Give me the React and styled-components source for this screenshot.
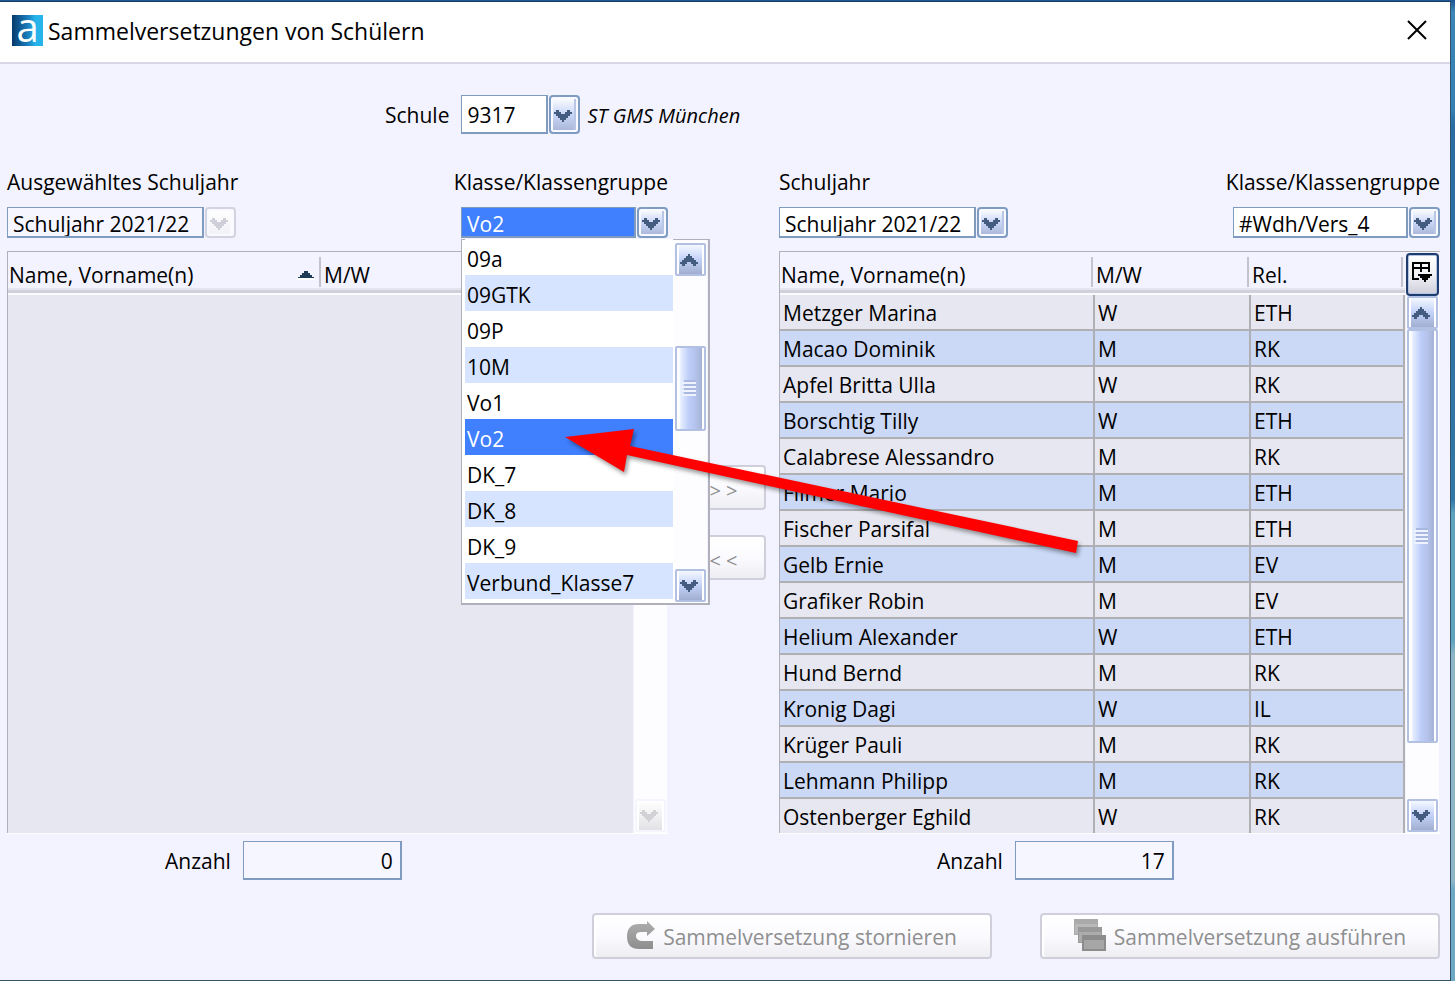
import React from "react";
import styled, { createGlobalStyle } from "styled-components";

const GlobalStyle = createGlobalStyle`
  * {
    box-sizing: border-box;
  }
  body {
    margin: 0;
    overflow: hidden;
  }
  body, button, input, select {
    font-family: "Open Sans", "Noto Sans", sans-serif;
    font-size: 21px;
    line-height: 28px;
    color: #000;
  }
`;

const Desktop = styled.div`
  display: flex;
  height: 100vh;
  padding: 2px 4px 1px 0;
  background: linear-gradient(#1d5590 0, #3a86b8 12px, #3480b2 110px, #296da3 125px, #3278a6 500px, #5ea3bd 514px, #5ea3bd 640px, #8db6c6 655px, #8db6c6 880px, #6da9c4 890px);
`;

const Window = styled.main`
  flex: 1;
  display: flex;
  flex-direction: column;
  min-width: 0;
  background: #f3f3ff;
  border-right: 1px solid #34536a;
  box-shadow: 0 1px 0 #34536a, 0 -1px 0 #1c3f68;
`;

const TitleBar = styled.header`
  display: flex;
  align-items: center;
  gap: 5px;
  height: 62px;
  padding: 0 22px 4px 12px;
  background: #fff;
  border-bottom: 2px solid #d8d7e8;

  h1 {
    flex: 1;
    margin: 0;
    padding-top: 2px;
    font-size: 23px;
    font-weight: 400;
    line-height: 32px;
  }
`;

const Logo = styled.span`
  display: flex;
  justify-content: center;
  width: 31px;
  height: 31px;
  background: linear-gradient(90deg, #06396c, #1a7cbb 50%, #27b4ea 75%);
  color: #fff;
  font-size: 40px;
  line-height: 23px;
`;

const CloseButton = styled.button`
  display: flex;
  padding: 0;
  border: 0;
  background: none;
`;

const Body = styled.div`
  flex: 1;
  display: flex;
  flex-direction: column;
  min-height: 0;
  padding: 31px 10px 21px 7px;
`;

const SchoolRow = styled.div`
  display: flex;
  align-items: center;
  gap: 12px;
  padding-left: 378px;
  margin-bottom: 34px;

  em {
    margin-left: -5px;
    padding-top: 2px;
    font-size: 20px;
  }
`;

const Columns = styled.div`
  flex: 1;
  display: grid;
  grid-template-columns: minmax(0, 1fr) 111px minmax(0, 1fr);
  grid-template-rows: minmax(0, 1fr);
  min-height: 0;
`;

const Panel = styled.section`
  display: flex;
  flex-direction: column;
  min-height: 0;
`;

const Fields = styled.div`
  display: flex;
  justify-content: space-between;
  margin-bottom: 13px;
`;

const Field = styled.div`
  display: flex;
  flex-direction: column;
  align-items: ${props => (props.$end ? "flex-end" : "flex-start")};
  gap: 11px;
  white-space: nowrap;
`;

const ComboBox = styled.div`
  position: relative;
  display: flex;
  gap: 1px;
  width: ${props => props.$width}px;
  height: ${props => (props.$tall ? 39 : 31)}px;

  select {
    appearance: none;
    flex: 1;
    min-width: 0;
    padding: 2px 5px 0;
    border: solid #7f9bbf;
    border-width: 1px 2px 2px 1px;
    border-radius: 0;
    outline: 0;
    background: ${props => (props.$active ? "#4080ff" : props.$disabled ? "#f5f6ff" : "#fff")};
    color: ${props => (props.$active ? "#fff" : "#000")};
    opacity: 1;
  }
`;

const ArrowButton = styled.button`
  display: flex;
  align-items: center;
  justify-content: center;
  flex: none;
  width: 31px;
  padding: 2px 4px 0 0;
  border: 2px solid ${props => (props.disabled ? "#d3d3df" : "#7f9cc2")};
  border-radius: 4px;
  background: ${props =>
    props.disabled ? "linear-gradient(#fff, #f1f1f6)" : "linear-gradient(#fff, #c9d6f8 50%, #a7b4d6)"};
  box-shadow: inset 0 0 0 2px #f8faff, inset -4px 0 0 ${props => (props.disabled ? "#fafaff" : "#bac6e6")};
  color: ${props => (props.disabled ? "#cfcfda" : "#445c80")};
`;

const Popup = styled.div`
  position: absolute;
  top: 32px;
  left: 0;
  z-index: 2;
  display: flex;
  gap: 1px;
  width: 249px;
  height: 366px;
  padding: 0 0 1px 3px;
  border: solid #b0b0bc;
  border-width: 1px 2px 2px 1px;
  background: #fff;
`;

const Options = styled.ul`
  flex: 1;
  margin: -1px 0 0;
  padding: 0;
  overflow: hidden;
  list-style: none;
`;

const Option = styled.li`
  height: 36px;
  padding: 6px 2px 2px;
  background: ${props => (props["aria-selected"] ? "#4080ff" : "#fff")};
  color: ${props => (props["aria-selected"] ? "#fff" : "#000")};

  &:nth-child(even) {
    background: ${props => (props["aria-selected"] ? "#4080ff" : "#d6e4ff")};
  }
`;

const Scroll = styled.div`
  display: flex;
  flex-direction: column;
  flex: ${props => (props.$fill ? 1 : "none")};
  width: 34px;
  min-height: 0;
  padding: ${props => (props.$fill ? "0 1px 1px" : "3px 1px 0")};
  background: #fdfdff;
  border-right: 1px solid #f3f3ff;
`;

const ScrollButton = styled.button`
  display: flex;
  align-items: center;
  justify-content: center;
  flex: none;
  height: 33px;
  padding: 0 4px 0 0;
  border: 2px solid ${props => (props.disabled ? "#f5f5fd" : "#b1c0e3")};
  border-radius: 2px;
  background: ${props =>
    props.disabled ? "linear-gradient(#fff, #e2e2e6)" : "linear-gradient(#f4f8ff, #c2d1f8 50%, #a1aed0)"};
  box-shadow: inset 2px 0 0 #fff, inset -2px 0 0 #fff;
  color: ${props => (props.disabled ? "#d2d2d6" : "#445c80")};
`;

const Track = styled.div`
  flex: 1;
  min-height: 0;
  padding-top: ${props => props.$offset}px;
`;

const Thumb = styled.div`
  display: flex;
  align-items: center;
  justify-content: center;
  height: ${props => props.$size}%;
  padding-right: 3px;
  border: 2px solid #b1c0e3;
  border-radius: 2px;
  background: linear-gradient(90deg, #fff 2px, #e4edff 4px, #bdcdf8 12px, #b5c4ec 18px, #a1add0);
  box-shadow: inset -2px 0 0 #fff;
`;

const Grid = styled.div`
  flex: 1;
  display: flex;
  min-height: 0;
  border: solid #b0b0b8;
  border-width: 1px 0 0 1px;
  box-shadow: 0 1px 0 #fff;
`;

const GridView = styled.div`
  flex: 1;
  min-width: 0;
  overflow: hidden;
  background: #e7e7f1;
`;

const Table = styled.table`
  width: 100%;
  table-layout: fixed;
  border-collapse: separate;
  border-spacing: 0;

  th {
    height: 43px;
    padding: 0;
    font-weight: 400;
    text-align: left;
    background: linear-gradient(#f3f3ff 36px, #e5e5ef 36px, #e5e5ef 38px, #d0d0da 38px, #d0d0da 41px, #fafaff 41px);
  }
  th:first-child {
    width: 315px;
  }
  th:nth-child(2):not(:last-child) {
    width: 156px;
  }
  td {
    height: 36px;
    padding: 4px 3px 2px;
    border: solid #b0b0b4;
    border-width: 0 2px 2px 0;
  }
  tbody tr:nth-child(even) {
    background: #cbd9f6;
  }
`;

const HeadCell = styled.div`
  display: flex;
  align-items: center;
  justify-content: space-between;
  height: 30px;
  margin: 2px 2px 6px 0;
  padding: 6px 4px 0 1px;
  border-right: 2px solid #c3c3d0;
`;

const GridSide = styled.div`
  display: flex;
  flex-direction: column;
  width: 35px;
  padding-left: 1px;
`;

const ColumnControl = styled.button`
  display: flex;
  align-items: center;
  justify-content: center;
  width: 33px;
  height: 43px;
  margin-top: 1px;
  padding: 0 1px 6px 0;
  border: 2px solid #1e3c70;
  border-radius: 4px;
  background: linear-gradient(#fff, #f1f1f6 50%, #cfcfdc);
  box-shadow: inset 0 0 0 1px #b4c4e0;
`;

const Transfer = styled.div`
  display: flex;
  flex-direction: column;
  align-items: center;
  gap: 25px;
  padding-top: 297px;
`;

const PushButton = styled.button`
  display: flex;
  align-items: center;
  justify-content: center;
  gap: 8px;
  width: ${props => (props.$small ? 85 : 400)}px;
  height: ${props => (props.$small ? 45 : 46)}px;
  padding: ${props => (props.$small ? 6 : 2)}px 0 0;
  border: 2px solid #cfcedb;
  border-radius: 4px;
  background: linear-gradient(#fff, #fbfbff 50%, #ededf2);
  box-shadow: inset 2px 0 0 #fff;
  color: #8f8f8f;
  font-size: ${props => (props.$small ? 20 : 21)}px;

  svg {
    margin-bottom: 4px;
  }
`;

const Count = styled.div`
  display: flex;
  align-items: center;
  gap: 12px;
  padding-left: 158px;
  margin-top: 8px;

  input {
    width: 159px;
    height: 39px;
    padding: 2px 7px 0;
    border: solid #7f9bbf;
    border-width: 1px 2px 2px 1px;
    outline: 0;
    background: #f5f6ff;
    text-align: right;
  }
`;

const Footer = styled.footer`
  display: flex;
  justify-content: flex-end;
  gap: 48px;
  margin-top: 33px;
`;

const Pointer = styled.svg`
  position: absolute;
  top: 425px;
  left: 560px;
  z-index: 3;
  pointer-events: none;
  filter: drop-shadow(2px 3px 2px rgba(0, 0, 0, 0.4));
`;

const classes = ["09a", "09GTK", "09P", "10M", "Vo1", "Vo2", "DK_7", "DK_8", "DK_9", "Verbund_Klasse7"];

const pupils = [
  ["Metzger Marina", "W", "ETH"],
  ["Macao Dominik", "M", "RK"],
  ["Apfel Britta Ulla", "W", "RK"],
  ["Borschtig Tilly", "W", "ETH"],
  ["Calabrese Alessandro", "M", "RK"],
  ["Filmer Mario", "M", "ETH"],
  ["Fischer Parsifal", "M", "ETH"],
  ["Gelb Ernie", "M", "EV"],
  ["Grafiker Robin", "M", "EV"],
  ["Helium Alexander", "W", "ETH"],
  ["Hund Bernd", "M", "RK"],
  ["Kronig Dagi", "W", "IL"],
  ["Krüger Pauli", "M", "RK"],
  ["Lehmann Philipp", "M", "RK"],
  ["Ostenberger Eghild", "W", "RK"]
];

const Chevron = ({ up }) => (
  <svg width="18" height="12" viewBox="0 0 18 12" fill="currentColor" shapeRendering="crispEdges">
    <path
      d="M0 4V2H2V0H5V2H7V4H11V2H13V0H16V2H18V4H16V6H14V8H12V10H10V12H8V10H6V8H4V6H2V4Z"
      transform={up ? "rotate(180 9 6)" : undefined}
    />
  </svg>
);

const SortIcon = () => (
  <svg width="18" height="11" viewBox="0 0 18 11" shapeRendering="crispEdges">
    <path d="M0 9h18v2H0z" fill="#fff" />
    <path d="M1 9V8h2V6h2V4h2V2h4v2h2v2h2v2h2v1z" fill="#1d3c55" />
  </svg>
);

const Grip = () => (
  <svg width="14" height="16" viewBox="0 0 14 16" shapeRendering="crispEdges">
    <path d="M2 0h12v2H2zM2 4h12v2H2zM2 8h12v2H2zM2 12h12v2H2z" fill="#a9b8de" />
    <path d="M0 2h14v2H0zM0 6h14v2H0zM0 10h14v2H0zM0 14h14v2H0z" fill="#eef3ff" />
  </svg>
);

const ColumnsIcon = () => (
  <svg width="20" height="20" viewBox="0 0 20 20" shapeRendering="crispEdges">
    <path d="M1 18V1h16v9M1 6h16M9 1v9M1 17h6" fill="none" stroke="#000" strokeWidth="2" />
    <path d="M6 12h14v2h-2v2h-2v2h-2v2h-2v-2h-2v-2H8v-2H6z" fill="#000" />
  </svg>
);

const UndoIcon = () => (
  <svg width="28" height="28" viewBox="0 0 28 28">
    <defs>
      <linearGradient id="undo" x1="0" y1="0" x2="0" y2="1">
        <stop offset="0" stopColor="#aeaeae" />
        <stop offset="1" stopColor="#8e8e8e" />
      </linearGradient>
    </defs>
    <path d="M20 0L28 8L20 15V11H14Q9 11 9 15T14 20H26V28H12Q0 28 0 15.500Q0 3 12 3H20Z" fill="url(#undo)" />
  </svg>
);

const StackIcon = () => (
  <svg width="32" height="32" viewBox="0 0 32 32">
    <path d="M0 0h24v16H0z" fill="#aaa" />
    <path d="M1 5h22v10H1z" fill="#b8b8b8" />
    <path d="M4 8h24v16H4z" fill="#999" />
    <path d="M5 13h22v10H5z" fill="#acacac" />
    <path d="M8 16h24v16H8z" fill="#8c8c8c" />
    <path d="M10 21h20v9H10z" fill="#a6a6a6" />
  </svg>
);

const Combo = ({ id, value, width, tall, disabled, active, label, children }) => (
  <ComboBox $width={width} $tall={tall} $disabled={disabled} $active={active}>
    <select id={id} disabled={disabled} defaultValue={value}>
      <option>{value}</option>
    </select>
    <ArrowButton type="button" aria-label={`${label} öffnen`} disabled={disabled}>
      <Chevron />
    </ArrowButton>
    {children}
  </ComboBox>
);

const ScrollBar = ({ fill, disabled, offset, size }) => (
  <Scroll $fill={fill}>
    <ScrollButton type="button" aria-label="Nach oben" disabled={disabled}>
      <Chevron up />
    </ScrollButton>
    <Track $offset={offset}>
      {!disabled && (
        <Thumb $size={size}>
          <Grip />
        </Thumb>
      )}
    </Track>
    <ScrollButton type="button" aria-label="Nach unten" disabled={disabled}>
      <Chevron />
    </ScrollButton>
  </Scroll>
);

const PupilGrid = ({ columns, rows, sorted }) => (
  <Grid>
    <GridView>
      <Table>
        <thead>
          <tr>
            {columns.map((name, i) => (
              <th key={name}>
                <HeadCell>
                  {name}
                  {sorted && i === 0 && <SortIcon />}
                </HeadCell>
              </th>
            ))}
          </tr>
        </thead>
        <tbody>
          {rows.map(row => (
            <tr key={row[0]}>
              {row.map((cell, i) => (
                <td key={i}>{cell}</td>
              ))}
            </tr>
          ))}
        </tbody>
      </Table>
    </GridView>
    <GridSide>
      <ColumnControl type="button" aria-label="Spalten">
        <ColumnsIcon />
      </ColumnControl>
      <ScrollBar fill disabled={!rows.length} offset={0} size={88} />
    </GridSide>
  </Grid>
);

const App = () => {
  return (
    <Desktop>
      <GlobalStyle />
      <Window>
        <TitleBar>
          <Logo>a</Logo>
          <h1>Sammelversetzungen von Schülern</h1>
          <CloseButton type="button" aria-label="Schließen">
            <svg width="22" height="22" viewBox="0 0 22 22" stroke="#000" strokeWidth="2">
              <path d="M2 2l18 18M20 2L2 20" />
            </svg>
          </CloseButton>
        </TitleBar>
        <Body>
          <SchoolRow>
            <label htmlFor="school">Schule</label>
            <Combo id="school" label="Schule" value="9317" width={119} tall />
            <em>ST GMS München</em>
          </SchoolRow>
          <Columns>
            <Panel>
              <Fields>
                <Field>
                  <label htmlFor="yearFrom">Ausgewähltes Schuljahr</label>
                  <Combo id="yearFrom" label="Schuljahr" value="Schuljahr 2021/22" width={229} disabled />
                </Field>
                <Field $end>
                  <label htmlFor="classFrom">Klasse/Klassengruppe</label>
                  <Combo id="classFrom" label="Klasse" value="Vo2" width={207} active>
                    <Popup>
                      <Options role="listbox" aria-label="Klassen">
                        {classes.map(name => (
                          <Option key={name} role="option" aria-selected={name === "Vo2"}>
                            {name}
                          </Option>
                        ))}
                      </Options>
                      <ScrollBar offset={70} size={38} />
                    </Popup>
                  </Combo>
                </Field>
              </Fields>
              <PupilGrid columns={["Name, Vorname(n)", "M/W"]} rows={[]} sorted />
              <Count>
                <label htmlFor="countFrom">Anzahl</label>
                <input id="countFrom" value="0" readOnly />
              </Count>
            </Panel>
            <Transfer>
              <PushButton type="button" $small disabled>&gt; &gt;</PushButton>
              <PushButton type="button" $small disabled>&lt; &lt;</PushButton>
            </Transfer>
            <Panel>
              <Fields>
                <Field>
                  <label htmlFor="yearTo">Schuljahr</label>
                  <Combo id="yearTo" label="Schuljahr" value="Schuljahr 2021/22" width={229} />
                </Field>
                <Field $end>
                  <label htmlFor="classTo">Klasse/Klassengruppe</label>
                  <Combo id="classTo" label="Klasse" value="#Wdh/Vers_4" width={207} />
                </Field>
              </Fields>
              <PupilGrid columns={["Name, Vorname(n)", "M/W", "Rel."]} rows={pupils} />
              <Count>
                <label htmlFor="countTo">Anzahl</label>
                <input id="countTo" value="17" readOnly />
              </Count>
            </Panel>
          </Columns>
          <Footer>
            <PushButton type="button" disabled>
              <UndoIcon />
              Sammelversetzung stornieren
            </PushButton>
            <PushButton type="button" disabled>
              <StackIcon />
              Sammelversetzung ausführen
            </PushButton>
          </Footer>
        </Body>
      </Window>
      <Pointer width="530" height="140" viewBox="0 0 530 140">
        <path d="M5 12L74 4L70 21L518 116L516 128L67 30L64 47Z" fill="#f00" />
      </Pointer>
    </Desktop>
  );
};

export default App;
